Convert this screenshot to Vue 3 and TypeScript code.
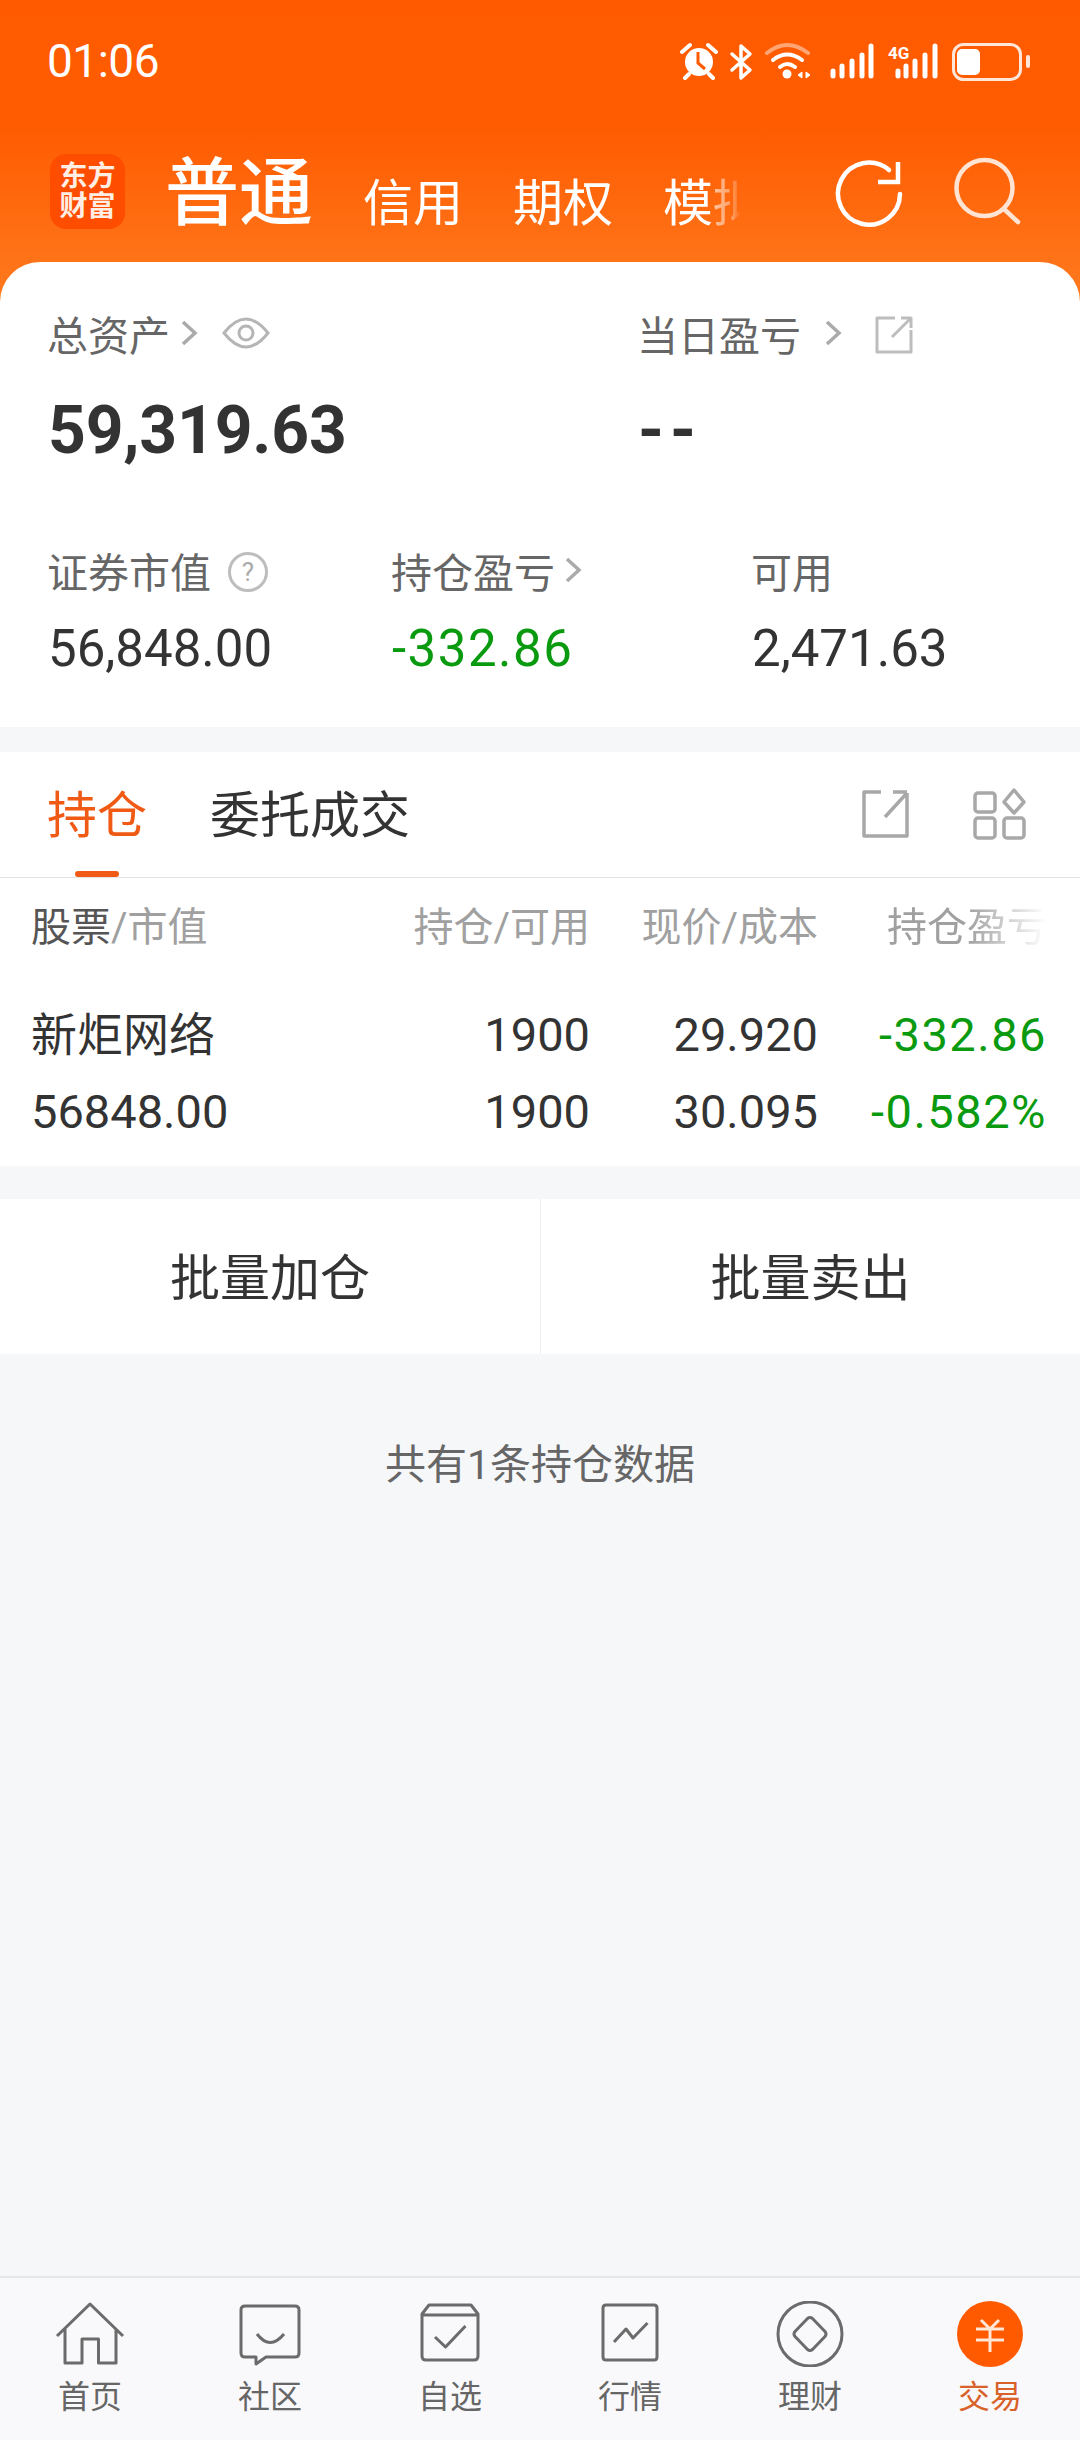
<script setup lang="ts">
interface NavItem {
  label: string
  d: string
  active?: boolean
}

const navItems: NavItem[] = [
  { label: '首页', d: 'M3 35 36 3 69 35M11 28V62H28V38H44.500V62H62V28' },
  { label: '社区', d: 'M11 5H61Q65 5 65 9V52Q65 56 61 56H32L22 63V56H11Q7 56 7 52V9Q7 5 11 5ZM23 33Q36 50 50 33' },
  { label: '自选', d: 'M15 4H57L64 13V55Q64 59 60 59H12Q8 59 8 55V13ZM8 14H64M21 36 31.500 46 51.500 25' },
  { label: '行情', d: 'M12 4H60Q63 4 63 7V56Q63 59 60 59H12Q9 59 9 56V7Q9 4 12 4ZM20 41 32 28 39 37 53.500 22' },
  { label: '理财', d: 'M36 1A32 32 0 1 1 36 65A32 32 0 1 1 36 1ZM33.500 17.500Q36 15.500 38.500 17.500L51 30.500Q53 33 51 35.500L38.500 48.500Q36 50.500 33.500 48.500L21 35.500Q19 33 21 30.500Z' },
  { label: '交易', d: '', active: true }
]
</script>

<template>
  <div class="page">
    <div class="top">
      <div class="status">
        <span class="time">01:06</span>
        <svg class="status-icons" viewBox="680 35 352 50" width="352" height="50" fill="none">
          <circle cx="699" cy="61" r="14" fill="#fff" />
          <path d="M698 51V62L705 68" stroke="#ff5a00" stroke-width="3" />
          <path d="M682 51 690 44M716 51 708 44M689 73 685 77M709 73 713 77" stroke="#fff" stroke-width="4" stroke-linecap="round" />
          <path d="M732 53 750 69 741 77V45L750 53 732 69" stroke="#fff" stroke-width="3.500" stroke-linejoin="round" stroke-linecap="round" />
          <path d="M767 52Q787 36 808 52" stroke="#fff" stroke-opacity=".45" stroke-width="4" stroke-linecap="round" />
          <path d="M773 59Q787 48 802 59M780 66Q787 60 795 66" stroke="#fff" stroke-width="4" stroke-linecap="round" />
          <circle cx="787" cy="73" r="4.500" fill="#fff" />
          <path d="M802 71 798 74 802 77ZM806 71 810 74 806 77Z" fill="#fff" stroke="#fff" />
          <path d="M833 75V70M842 75V65M852 75V60M862 75V54M871 75V45" stroke="#fff" stroke-width="5" stroke-linecap="round" />
          <text x="888" y="58" class="status-4g">4G</text>
          <path d="M898 75V70M906 75V65M915 75V60M925 75V54M935 75V45" stroke="#fff" stroke-width="5" stroke-linecap="round" />
          <rect x="953.500" y="43.500" width="67" height="35" rx="10" stroke="#fff" stroke-opacity=".85" stroke-width="3" />
          <rect x="957" y="48" width="23" height="26" rx="5" fill="#fff" />
          <path d="M1028 56V65" stroke="#fff" stroke-opacity=".85" stroke-width="4" stroke-linecap="round" />
        </svg>
      </div>

      <div class="header">
        <div class="logo"><span>东方</span><span>财富</span></div>
        <div class="account-main">普通</div>
        <div class="account-tabs">
          <span>信用</span>
          <span>期权</span>
          <span>模拟</span>
        </div>
        <svg class="header-icons" viewBox="830 155 195 75" width="195" height="75" fill="none" stroke="#fff" stroke-width="4.500">
          <path d="M899 194A31 31 0 1 1 888 170" stroke-linecap="round" />
          <path d="M897 162V182H877" stroke-linejoin="miter" />
          <g stroke="#ffe3d3">
            <circle cx="983.500" cy="188" r="28" />
            <path d="M1003 209 1017 222" stroke-linecap="round" />
          </g>
        </svg>
      </div>

      <div class="assets">
        <div class="assets-row first">
          <div class="label">
            总资产
            <svg class="chev" viewBox="0 0 18 26" width="18" height="26"><path d="M3 2 15 13 3 24" /></svg>
            <svg class="eye" viewBox="0 0 48 32" width="48" height="32" fill="none" stroke="#b5b5b5" stroke-width="3">
              <path d="M2 16Q24 -12 46 16Q24 44 2 16Z" />
              <circle cx="24" cy="16" r="7" />
            </svg>
          </div>
          <div class="label">
            当日盈亏
            <svg class="chev wide" viewBox="0 0 18 26" width="18" height="26"><path d="M3 2 15 13 3 24" /></svg>
            <svg class="open-small" viewBox="0 0 38 38" width="38" height="38" fill="none" stroke="#bdbdbd" stroke-width="3">
              <path d="M20 2H2V36H36V14M17 21 35 3M26 2H36V12" stroke-linejoin="round" />
            </svg>
          </div>
        </div>
        <div class="assets-row big">
          <div class="total">59,319.63</div>
          <div class="total dash">--</div>
        </div>
        <div class="assets-row second">
          <div class="label">
            证券市值
            <span class="help">?</span>
          </div>
          <div class="label">
            持仓盈亏
            <svg class="chev tight" viewBox="0 0 18 26" width="18" height="26"><path d="M3 2 15 13 3 24" /></svg>
          </div>
          <div class="label">可用</div>
        </div>
        <div class="assets-row values">
          <div class="value">56,848.00</div>
          <div class="value green">-332.86</div>
          <div class="value">2,471.63</div>
        </div>
      </div>
    </div>

    <div class="tabs">
      <span class="tab active">持仓</span>
      <span class="tab">委托成交</span>
      <svg class="tab-icons" viewBox="860 788 166 53" width="166" height="53" fill="none" stroke="#a8a8a8" stroke-width="3.500">
        <path d="M881 792H864V836H907V793M893 792H907M907 793 885 817" stroke-linejoin="round" />
        <rect x="975" y="793" width="20" height="19" rx="3" />
        <rect x="975" y="818" width="20" height="20" rx="3" />
        <rect x="1004" y="818" width="20" height="20" rx="3" />
        <path d="M1014 790 1024 802 1014 813 1004 802Z" stroke-linejoin="round" />
      </svg>
      <i class="tab-line"></i>
    </div>

    <div class="holdings">
      <div class="grid head">
        <div class="name-head"><b>股票</b>/市值</div>
        <div>持仓/可用</div>
        <div>现价/成本</div>
        <div class="fade">持仓盈亏</div>
      </div>
      <div class="grid row one">
        <div class="stock">新炬网络</div>
        <div>1900</div>
        <div>29.920</div>
        <div class="green">-332.86</div>
      </div>
      <div class="grid row">
        <div>56848.00</div>
        <div>1900</div>
        <div>30.095</div>
        <div class="green">-0.582%</div>
      </div>
    </div>

    <div class="actions">
      <div>批量加仓</div>
      <div>批量卖出</div>
    </div>

    <div class="summary">共有1条持仓数据</div>

    <nav class="bottom-nav">
      <div v-for="item in navItems" :key="item.label" class="nav-item" :class="{ active: item.active }">
        <svg v-if="item.active" viewBox="0 0 72 66" width="72" height="66">
          <circle cx="36" cy="33" r="33" fill="#ff5a00" />
          <path d="M27 19 36 28 45 19M22 28H50M22 39H50M36 28V51" fill="none" stroke="#ffe6d6" stroke-width="3" />
        </svg>
        <svg v-else viewBox="0 0 72 66" width="72" height="66" fill="none" stroke="#6b6b6b" stroke-width="3" stroke-linejoin="round">
          <path :d="item.d" />
        </svg>
        <span>{{ item.label }}</span>
      </div>
    </nav>
  </div>
</template>

<style scoped>
.page {
  display: flex; flex-direction: column;
  width: 1080px; height: 2440px; overflow: hidden;
  background: #f6f7f9; color: #333;
  font-family: Roboto, "Noto Sans CJK SC", sans-serif;
}
.top {
  background: linear-gradient(180deg, #ff5a00 0, #ff5c02 130px, #ff7a1e 300px) no-repeat;
  background-size: 100% 310px;
}
.status {
  display: flex; align-items: center; justify-content: space-between;
  height: 122px; padding: 0 48px 0 47px;
}
.time { color: #fff; font-size: 46px; letter-spacing: -0.5px; line-height: 1; }
.status-icons { display: block; }
.status-4g { fill: #fff; font-size: 17px; font-weight: 700; }

.header { display: flex; align-items: flex-start; height: 140px; padding-left: 50px; color: #fff; }
.logo {
  display: flex; flex-direction: column; align-items: center; justify-content: center;
  width: 75px; height: 75px; margin-top: 32px;
  border-radius: 16px; background: #ff4d00;
  font-size: 28px; font-weight: 700; line-height: 30px; color: #ffeee4;
}
.account-main { margin: 32px 0 0 40px; font-size: 74px; line-height: 80px; font-weight: 500; }
.account-tabs {
  display: flex; gap: 50px;
  width: 385px; height: 60px; margin: 52px 0 0 50px;
  overflow: hidden; white-space: nowrap;
  font-size: 50px; line-height: 60px;
  -webkit-mask-image: linear-gradient(90deg, #000 90%, rgba(0, 0, 0, .55) 92%, rgba(0, 0, 0, .35) 96%, transparent 98%);
  mask-image: linear-gradient(90deg, #000 90%, rgba(0, 0, 0, .55) 92%, rgba(0, 0, 0, .35) 96%, transparent 98%);
}
.account-tabs span { flex: none; }
.header-icons { margin: 33px 0 0 83px; flex: none; }

.assets { padding: 43px 0 48px 48px; background: #fff; border-radius: 40px 40px 0 0; }
.assets-row { display: grid; }
.first, .big { grid-template-columns: 590px 1fr; }
.second, .values { grid-template-columns: 344px 360px 1fr; }
.big { margin-top: 30px; }
.second { margin-top: 71px; }
.values { margin-top: 21px; }
.label { display: flex; align-items: center; height: 56px; margin-left: -1px; font-size: 41px; color: #666; }
.chev { margin-left: 10px; fill: none; stroke: #aaa; stroke-width: 3.500; }
.chev.wide { margin-left: 23px; }
.chev.tight { margin-left: 9px; }
.eye { margin-left: 24px; }
.open-small { margin: 3px 0 0 33px; }
.help {
  display: flex; align-items: center; justify-content: center;
  width: 40px; height: 40px; margin: 4px 0 0 17px; box-sizing: border-box;
  border: 3px solid #bdbdbd; border-radius: 50%;
  font-size: 26px; color: #aaa;
}
.total { height: 80px; font-size: 66px; line-height: 80px; font-weight: 700; letter-spacing: -0.2px; }
.total.dash { letter-spacing: 6px; }
.value { height: 60px; font-size: 51px; line-height: 60px; color: #333; }
.green { color: #0a9a0f !important; letter-spacing: 1.500px; }

.tabs {
  position: relative; display: flex; align-items: flex-start; flex: none;
  height: 92px; margin-top: 25px; padding: 33px 54px 0 47px;
  background: #fff; border-bottom: 1px solid #e3e3e3;
}
.tab { margin: 1px 63px 0 0; font-size: 50px; line-height: 60px; color: #333; }
.tab.active { color: #f05a14; }
.tab-icons { margin: 3px 0 0 auto; }
.tab-line {
  position: absolute; left: 75px; bottom: 0;
  width: 44px; height: 6px; border-radius: 3px; background: #f05a14;
}

.holdings { padding: 22px 33px 24px 31px; background: #fff; flex: none; }
.grid { display: grid; grid-template-columns: 1fr 200px 228px 229px; text-align: right; }
.grid > :first-child { text-align: left; }
.head { height: 56px; font-size: 40px; line-height: 56px; color: #a0a0a0; }
.name-head b { font-weight: 400; color: #555; }
.fade {
  -webkit-mask-image: linear-gradient(90deg, #000 65%, transparent 100%);
  mask-image: linear-gradient(90deg, #000 65%, transparent 100%);
}
.row { height: 60px; margin-top: 17px; font-size: 47px; line-height: 60px; color: #333; }
.row.one { margin-top: 49px; }
.stock { font-size: 46px; }

.actions {
  display: grid; grid-template-columns: 1fr 1fr; flex: none;
  height: 155px; margin-top: 33px; background: #fff;
}
.actions div {
  display: flex; align-items: center; justify-content: center;
  padding-bottom: 6px;
  font-size: 50px; color: #333;
}
.actions div + div { border-left: 1px solid #eee; }
.summary { margin-top: 83px; text-align: center; font-size: 41px; line-height: 56px; color: #666; }

.bottom-nav {
  display: grid; grid-template-columns: repeat(6, 1fr);
  height: 164px; margin-top: auto; box-sizing: border-box; padding-top: 23px;
  background: #f9f9fb; border-top: 2px solid #e6e6e8;
}
.nav-item { display: flex; flex-direction: column; align-items: center; font-size: 32px; line-height: 40px; color: #666; }
.nav-item svg { display: block; margin-bottom: 10px; }
.nav-item.active { color: #d8622a; }
</style>

<style>
body { margin: 0; background: #f6f7f9; }
</style>
